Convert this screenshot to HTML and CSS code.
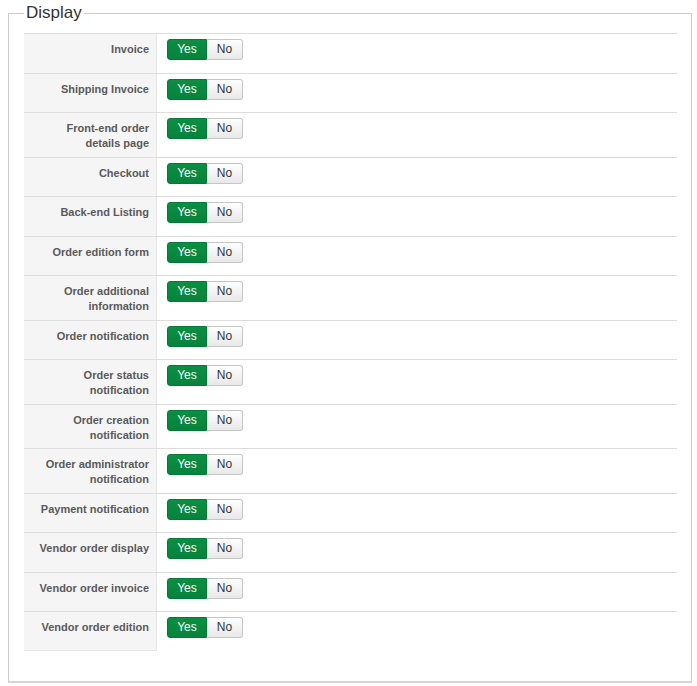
FILE: index.html
```html
<!DOCTYPE html>
<html lang="en">
<head>
    <meta charset="UTF-8">
    <meta name="viewport" content="width=device-width, initial-scale=1.0">
    <title>Display</title>
    <link rel="stylesheet" href="styles.css">
</head>
<body>
    <fieldset class="display-box">
        <legend>Display</legend>
        <div class="options">
            <div class="option"><div class="key">Invoice</div><div class="value"><div class="yesno"><span class="yes">Yes</span><span class="no">No</span></div></div></div>
            <div class="option"><div class="key">Shipping Invoice</div><div class="value"><div class="yesno"><span class="yes">Yes</span><span class="no">No</span></div></div></div>
            <div class="option"><div class="key">Front-end order details page</div><div class="value"><div class="yesno"><span class="yes">Yes</span><span class="no">No</span></div></div></div>
            <div class="option"><div class="key">Checkout</div><div class="value"><div class="yesno"><span class="yes">Yes</span><span class="no">No</span></div></div></div>
            <div class="option"><div class="key">Back-end Listing</div><div class="value"><div class="yesno"><span class="yes">Yes</span><span class="no">No</span></div></div></div>
            <div class="option"><div class="key">Order edition form</div><div class="value"><div class="yesno"><span class="yes">Yes</span><span class="no">No</span></div></div></div>
            <div class="option"><div class="key">Order additional information</div><div class="value"><div class="yesno"><span class="yes">Yes</span><span class="no">No</span></div></div></div>
            <div class="option"><div class="key">Order notification</div><div class="value"><div class="yesno"><span class="yes">Yes</span><span class="no">No</span></div></div></div>
            <div class="option"><div class="key">Order status notification</div><div class="value"><div class="yesno"><span class="yes">Yes</span><span class="no">No</span></div></div></div>
            <div class="option"><div class="key">Order creation notification</div><div class="value"><div class="yesno"><span class="yes">Yes</span><span class="no">No</span></div></div></div>
            <div class="option"><div class="key">Order administrator notification</div><div class="value"><div class="yesno"><span class="yes">Yes</span><span class="no">No</span></div></div></div>
            <div class="option"><div class="key">Payment notification</div><div class="value"><div class="yesno"><span class="yes">Yes</span><span class="no">No</span></div></div></div>
            <div class="option"><div class="key">Vendor order display</div><div class="value"><div class="yesno"><span class="yes">Yes</span><span class="no">No</span></div></div></div>
            <div class="option"><div class="key">Vendor order invoice</div><div class="value"><div class="yesno"><span class="yes">Yes</span><span class="no">No</span></div></div></div>
            <div class="option last"><div class="key">Vendor order edition</div><div class="value"><div class="yesno"><span class="yes">Yes</span><span class="no">No</span></div></div></div>
        </div>
    </fieldset>
</body>
</html>
```

FILE: styles.css
```css
body {
    font-family: "Liberation Sans", Arial, sans-serif;
    background: #fff;
    margin: 0;
    padding: 0;
}
.display-box {
    margin: 3px 5px 0 8px;
    padding: 10px 14px 30px 15px;
    border: 1px solid #ccc;
    border-bottom: 2px solid #d4d4d4;
    min-width: 0;
}
.display-box legend {
    font-size: 17px;
    line-height: 20px;
    color: #333;
    padding: 0 2px;
}
.options {
    display: flex;
    flex-direction: column;
}
.option {
    display: flex;
    border-top: 1px solid #ddd;
}
.key {
    width: 113px;
    flex: none;
    background: #f5f5f5;
    border-right: 1px solid #e6e6e6;
    padding: 8px 7px 5.5px 12px;
    font-size: 11px;
    line-height: 15px;
    font-weight: bold;
    color: #5a5a5a;
    text-align: right;
}
.option.last .key {
    border-bottom: 1px solid #e6e6e6;
}
.value {
    padding: 5px 10px 12.5px;
}
.yesno {
    display: flex;
    height: 21px;
    font-size: 12px;
    line-height: 19px;
}
.yesno span {
    display: block;
    text-align: center;
}
.yes {
    width: 38px;
    color: #fff;
    background: linear-gradient(#0a8f43, #06833b);
    border: 1px solid #05793a;
    border-radius: 3px 0 0 3px;
}
.no {
    width: 35px;
    color: #333;
    background: linear-gradient(#fff, #e8e8e8);
    border: 1px solid #c5c5c5;
    border-left: none;
    border-radius: 0 3px 3px 0;
}
```
